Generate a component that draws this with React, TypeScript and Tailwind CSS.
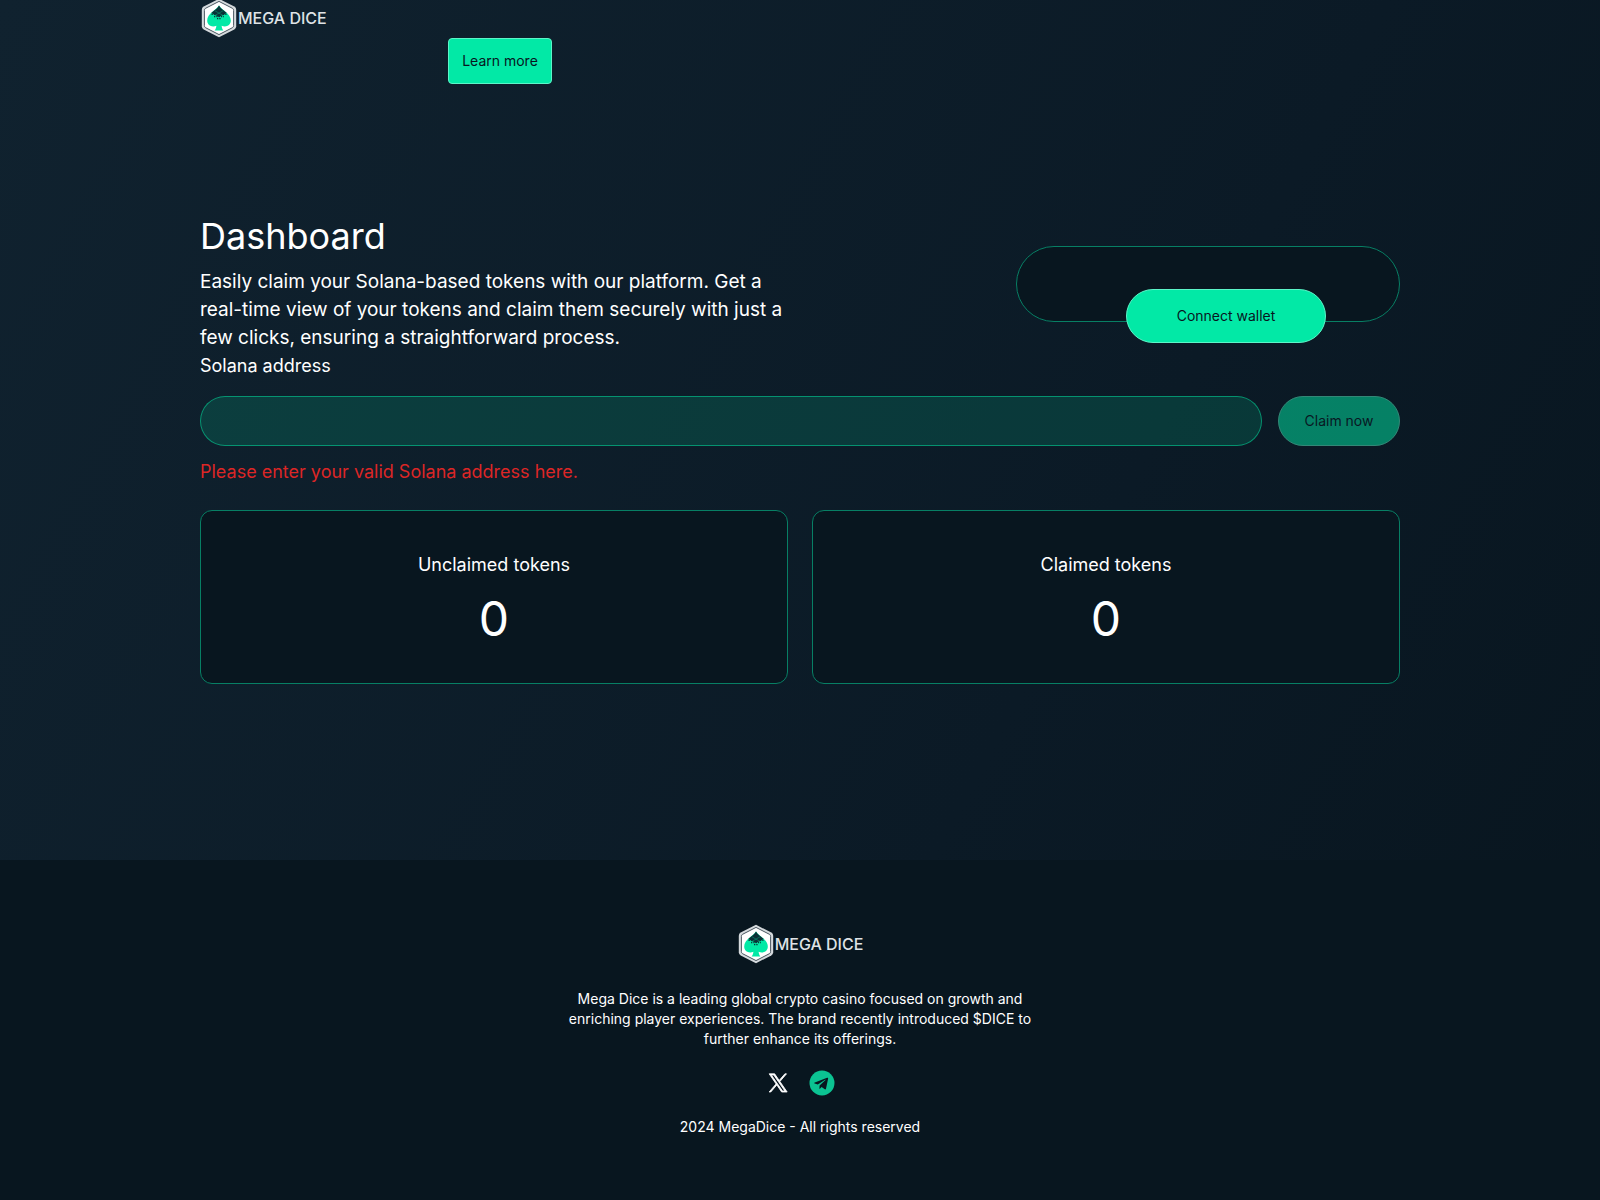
import type { ReactNode } from "react";

const tokenStats = [
  { label: "Unclaimed tokens", value: 0 },
  { label: "Claimed tokens", value: 0 },
];

function Logo() {
  return (
    <a href="#" aria-label="Mega Dice" className="flex h-[38px] w-fit items-center gap-px pl-px text-base leading-none font-medium text-[#dfe3e6]">
      <svg viewBox="0 0 36 40" className="h-10 w-9" aria-hidden="true">
        <path
          d="M18 0.8 L33.3 8.6 Q35.2 9.7 35.2 11.8 V28.2 Q35.2 30.3 33.3 31.4 L18 39.2 L2.7 31.4 Q0.8 30.3 0.8 28.2 V11.8 Q0.8 9.7 2.7 8.6 Z"
          fill="#d5dadd"
        />
        <path
          d="M18 3.4 L31.6 10.4 Q32.6 11 32.6 12.4 V27.6 Q32.6 29 31.6 29.6 L18 36.6 L4.4 29.6 Q3.4 29 3.4 27.6 V12.4 Q3.4 11 4.4 10.4 Z"
          fill="#fff"
          stroke="#4b5862"
          strokeWidth="1"
        />
        <path
          d="M18 7.6 C20.5 12 29.8 15.5 29.8 22.6 C29.8 28 24.6 29.6 20.6 27.8 C20.8 29.6 21.2 31 22.4 32.6 H13.6 C14.8 31 15.2 29.6 15.4 27.8 C11.4 29.6 6.2 28 6.2 22.6 C6.2 15.5 15.5 12 18 7.6 Z"
          fill="#02e9a6"
        />
        <path d="M18 7.6 C19.6 10.8 23.2 12.6 25.8 15 L18 19 L10.2 15 C12.8 12.6 16.4 10.8 18 7.6 Z" fill="#0a3237" />
        <path d="M10.5 16.4 H25.5 M13 18.6 H23 M16 20.6 H20" stroke="#0a3237" strokeWidth="1.1" strokeDasharray="1.3 1" />
        <path d="M14 12.8 L23 18 M22 12.8 L13 18" stroke="#08916f" strokeWidth="0.6" />
      </svg>
      MEGA DICE
    </a>
  );
}

function XIcon() {
  return (
    <svg viewBox="0 0 24 24" className="size-5" fill="currentColor" stroke="currentColor" strokeWidth="1" aria-hidden="true">
      <path d="M14.3 10.2 22.2 1h-1.9L13.4 8.9 8 1H1.4l8.3 12.1L1.4 22.8h1.9l7.3-8.5 5.8 8.5h6.6L14.3 10.2Zm-2.7 3.1-.9-1.3L4 2.4h2.9l5.4 7.8.9 1.3 7.1 10.1h-2.9l-5.8-8.3Z" />
    </svg>
  );
}

function TelegramIcon() {
  return (
    <svg viewBox="0 0 26 26" className="size-[26px]" aria-hidden="true">
      <circle cx="13" cy="13" r="12.5" fill="#0bc392" />
      <path
        d="M18.1 7.7 5.8 12.4c-.8.3-.8.8-.1 1l3.1 1 7.3-4.6c.4-.2.7 0 .4.2l-5.9 5.4-.2 3.3c.3 0 .5-.1.7-.3l1.5-1.5 3.2 2.4c.6.3 1 .1 1.2-.6l2.1-10c.2-.8-.4-1.2-1-1Z"
        fill="#08161f"
      />
    </svg>
  );
}

function SocialLink({ label, children }: { label: string; children: ReactNode }) {
  return (
    <a href="#" aria-label={label} className="flex size-7 items-center justify-center">
      {children}
    </a>
  );
}

export default function App() {
  return (
    <div className="flex min-h-screen flex-col bg-[linear-gradient(118deg,#10222f,#0b1a26_62%,#08151e)] font-['Inter','Noto_Sans',sans-serif] text-lg text-white">
      <header className="mx-auto w-full max-w-[1200px]">
        <div className="-mt-px">
          <Logo />
        </div>
        <nav className="flex w-1/2 justify-center">
          <button
            type="button"
            className="mt-px h-[46px] w-[104px] rounded border border-[#5cf5c8] bg-[#02e9a6] text-sm text-[#08161f]"
          >
            Learn more
          </button>
        </nav>
      </header>

      <main className="mx-auto mt-[132px] mb-44 w-full max-w-[1200px]">
        <div className="flex justify-between">
          <div>
            <h1 className="mb-3 text-4xl">Dashboard</h1>
            <p className="text-[19px] leading-7">
              Easily claim your Solana-based tokens with our platform. Get a
              <br />
              real-time view of your tokens and claim them securely with just a
              <br />
              few clicks, ensuring a straightforward process.
            </p>
          </div>
          <div className="relative mt-[30px] h-[76px] w-96 rounded-[38px] border border-[#077f64] bg-[#08161f]">
            <button
              type="button"
              className="absolute top-[42px] left-[109px] h-[54px] w-[200px] rounded-full border border-[#5cf5c8] bg-[#02e9a6] text-sm text-[#08161f]"
            >
              Connect wallet
            </button>
          </div>
        </div>

        <form>
          <label htmlFor="address" className="block">
            Solana address
          </label>
          <div className="mt-4 flex gap-4">
            <input
              id="address"
              type="text"
              className="h-[50px] min-w-0 flex-1 rounded-full border border-[#00eba6]/50 bg-[#00eba6]/15 px-6 outline-none"
            />
            <button
              type="button"
              disabled
              className="h-[50px] w-[122px] rounded-full border border-[#5cf5c8] bg-[#02e9a6] text-sm text-[#08161f] opacity-50"
            >
              Claim now
            </button>
          </div>
          <p className="mt-3 text-[#dc2626]">Please enter your valid Solana address here.</p>
        </form>

        <section className="mt-6 grid grid-cols-2 gap-6">
          {tokenStats.map((stat) => (
            <div
              key={stat.label}
              className="flex flex-col items-center gap-4 rounded-xl border border-[#077f64] bg-[#08161f] py-10"
            >
              <h2>{stat.label}</h2>
              <p className="text-5xl">{stat.value}</p>
            </div>
          ))}
        </section>
      </main>

      <footer className="flex flex-1 flex-col items-center bg-[#08161f] py-16 text-center text-sm">
        <div className="mt-px">
          <Logo />
        </div>
        <p className="mt-[26px] w-[484px]">
          Mega Dice is a leading global crypto casino focused on growth and enriching player experiences. The brand
          recently introduced $DICE to further enhance its offerings.
        </p>
        <div className="mt-5 flex gap-4">
          <SocialLink label="X">
            <XIcon />
          </SocialLink>
          <SocialLink label="Telegram">
            <TelegramIcon />
          </SocialLink>
        </div>
        <p className="mt-5">2024 MegaDice - All rights reserved</p>
      </footer>
    </div>
  );
}
